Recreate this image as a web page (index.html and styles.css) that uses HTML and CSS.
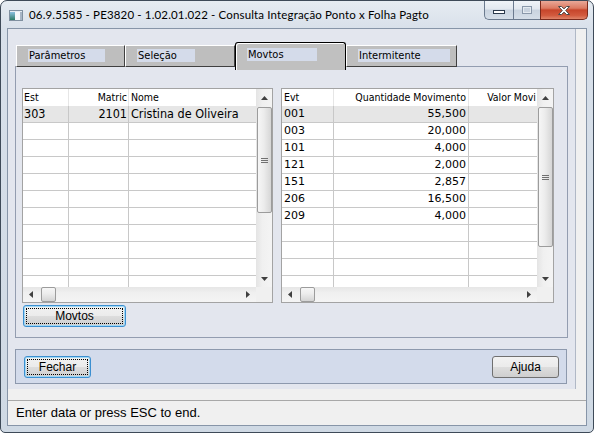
FILE: index.html
```html
<!DOCTYPE html>
<html>
<head>
<meta charset="utf-8">
<link rel="stylesheet" href="styles.css">
</head>
<body>
<div class="window">
  <div class="titlebar">
    <svg class="appicon" width="14" height="11" viewBox="0 0 14 11">
      <defs>
        <linearGradient id="ig" x1="0" y1="0" x2="0" y2="1">
          <stop offset="0" stop-color="#8cc0e0"/>
          <stop offset="1" stop-color="#2e7c66"/>
        </linearGradient>
      </defs>
      <rect x="0.5" y="0.5" width="13" height="10" fill="#e6ecf2" stroke="#8090a0"/>
      <rect x="1" y="2" width="5" height="8" fill="url(#ig)"/>
      <rect x="6" y="2" width="5" height="8" fill="#f6f8fa"/>
      <rect x="11" y="2" width="2" height="8" fill="#a8b6c6"/>
    </svg>
    <span class="title">06.9.5585 - PE3820 - 1.02.01.022 - Consulta Integração Ponto x Folha Pagto</span>
    <div class="controls">
      <div class="ctl ctl-min"><span class="min-glyph"></span></div>
      <div class="ctl ctl-max"><span class="max-glyph"></span></div>
      <div class="ctl ctl-close">
        <svg width="14" height="11" viewBox="0 0 14 11"><path d="M1.5 1.5h3l2.5 2.3 2.5-2.3h3l-3.8 4 3.8 4h-3l-2.5-2.3-2.5 2.3h-3l3.8-4z" fill="#fff" stroke="#4a4a4a" stroke-width="1" stroke-linejoin="round"/></svg>
      </div>
    </div>
  </div>

  <div class="client">
    <div class="client-top">
      <div class="main">
        <div class="tabs">
          <div class="tab tab-1"><span class="tab-label lw-1">Parâmetros</span></div>
          <div class="tab tab-2"><span class="tab-label lw-2">Seleção</span></div>
          <div class="tab tab-3 active"><span class="tab-label lw-3">Movtos</span></div>
          <div class="tab tab-4"><span class="tab-label lw-4">Intermitente</span></div>
        </div>

        <div class="tabpanel">
          <div class="grids">
            <div class="grid">
              <div class="grid-body">
                <div class="cells cells-left">
                  <div class="row hdr">
                    <div class="cell c-est hfont">Est</div>
                    <div class="cell c-mat num hfont">Matric</div>
                    <div class="cell c-nome hfont">Nome</div>
                  </div>
                  <div class="row sel lfont">
                    <div class="cell c-est">303</div>
                    <div class="cell c-mat num">2101</div>
                    <div class="cell c-nome">Cristina de Oliveira</div>
                  </div>
                  <div class="row"><div class="cell c-est"></div><div class="cell c-mat"></div><div class="cell c-nome"></div></div>
                  <div class="row"><div class="cell c-est"></div><div class="cell c-mat"></div><div class="cell c-nome"></div></div>
                  <div class="row"><div class="cell c-est"></div><div class="cell c-mat"></div><div class="cell c-nome"></div></div>
                  <div class="row"><div class="cell c-est"></div><div class="cell c-mat"></div><div class="cell c-nome"></div></div>
                  <div class="row"><div class="cell c-est"></div><div class="cell c-mat"></div><div class="cell c-nome"></div></div>
                  <div class="row"><div class="cell c-est"></div><div class="cell c-mat"></div><div class="cell c-nome"></div></div>
                  <div class="row"><div class="cell c-est"></div><div class="cell c-mat"></div><div class="cell c-nome"></div></div>
                  <div class="row"><div class="cell c-est"></div><div class="cell c-mat"></div><div class="cell c-nome"></div></div>
                  <div class="row"><div class="cell c-est"></div><div class="cell c-mat"></div><div class="cell c-nome"></div></div>
                  <div class="row"><div class="cell c-est"></div><div class="cell c-mat"></div><div class="cell c-nome"></div></div>
                </div>
                <div class="vscroll">
                  <div class="varrow"><svg width="7" height="4" viewBox="0 0 7 4"><path d="M3.5 0L7 4H0z" fill="#404040"/></svg></div>
                  <div class="vthumb th-left"><svg width="7" height="5" viewBox="0 0 7 5"><path d="M0 .5h7M0 2.5h7M0 4.5h7" stroke="#707070" stroke-width="1"/></svg></div>
                  <div class="vspacer"></div>
                  <div class="varrow"><svg width="7" height="4" viewBox="0 0 7 4"><path d="M0 0h7L3.5 4z" fill="#404040"/></svg></div>
                </div>
              </div>
              <div class="grid-foot">
                <div class="hscroll hs-left">
                  <div class="harrow"><svg width="4" height="7" viewBox="0 0 4 7"><path d="M4 0v7L0 3.5z" fill="#404040"/></svg></div>
                  <div class="hthumb"></div>
                  <div class="hspacer"></div>
                  <div class="harrow"><svg width="4" height="7" viewBox="0 0 4 7"><path d="M0 0l4 3.5L0 7z" fill="#404040"/></svg></div>
                </div>
                <div class="corner"></div>
              </div>
            </div>

            <div class="grid">
              <div class="grid-body">
                <div class="cells cells-right">
                  <div class="row hdr hfont">
                    <div class="cell c-evt">Evt</div>
                    <div class="cell c-qtd num">Quantidade Movimento</div>
                    <div class="cell c-val num">Valor Movi</div>
                  </div>
                  <div class="row sel rfont"><div class="cell c-evt">001</div><div class="cell c-qtd num">55,500</div><div class="cell c-val"></div></div>
                  <div class="row rfont"><div class="cell c-evt">003</div><div class="cell c-qtd num">20,000</div><div class="cell c-val"></div></div>
                  <div class="row rfont"><div class="cell c-evt">101</div><div class="cell c-qtd num">4,000</div><div class="cell c-val"></div></div>
                  <div class="row rfont"><div class="cell c-evt">121</div><div class="cell c-qtd num">2,000</div><div class="cell c-val"></div></div>
                  <div class="row rfont"><div class="cell c-evt">151</div><div class="cell c-qtd num">2,857</div><div class="cell c-val"></div></div>
                  <div class="row rfont"><div class="cell c-evt">206</div><div class="cell c-qtd num">16,500</div><div class="cell c-val"></div></div>
                  <div class="row rfont"><div class="cell c-evt">209</div><div class="cell c-qtd num">4,000</div><div class="cell c-val"></div></div>
                  <div class="row"><div class="cell c-evt"></div><div class="cell c-qtd"></div><div class="cell c-val"></div></div>
                  <div class="row"><div class="cell c-evt"></div><div class="cell c-qtd"></div><div class="cell c-val"></div></div>
                  <div class="row"><div class="cell c-evt"></div><div class="cell c-qtd"></div><div class="cell c-val"></div></div>
                  <div class="row"><div class="cell c-evt"></div><div class="cell c-qtd"></div><div class="cell c-val"></div></div>
                </div>
                <div class="vscroll">
                  <div class="varrow"><svg width="7" height="4" viewBox="0 0 7 4"><path d="M3.5 0L7 4H0z" fill="#404040"/></svg></div>
                  <div class="vthumb th-right"><svg width="7" height="5" viewBox="0 0 7 5"><path d="M0 .5h7M0 2.5h7M0 4.5h7" stroke="#707070" stroke-width="1"/></svg></div>
                  <div class="vspacer"></div>
                  <div class="varrow"><svg width="7" height="4" viewBox="0 0 7 4"><path d="M0 0h7L3.5 4z" fill="#404040"/></svg></div>
                </div>
              </div>
              <div class="grid-foot">
                <div class="hscroll hs-right">
                  <div class="harrow"><svg width="4" height="7" viewBox="0 0 4 7"><path d="M4 0v7L0 3.5z" fill="#404040"/></svg></div>
                  <div class="hthumb"></div>
                  <div class="hspacer"></div>
                  <div class="harrow"><svg width="4" height="7" viewBox="0 0 4 7"><path d="M0 0l4 3.5L0 7z" fill="#404040"/></svg></div>
                </div>
                <div class="corner"></div>
              </div>
            </div>
          </div>
          <button class="btn focus btn-movtos">Movtos</button>
        </div>

        <div class="btnpanel">
          <button class="btn focus btn-w">Fechar</button>
          <button class="btn btn-w">Ajuda</button>
        </div>
      </div>
      <div class="strip"></div>
    </div>
    <div class="status">Enter data or press ESC to end.</div>
  </div>
</div>
</body>
</html>
```

FILE: styles.css
```css
* { box-sizing: border-box; }
html, body { margin: 0; padding: 0; }
body {
  width: 594px;
  height: 433px;
  overflow: hidden;
  background: #ffffff;
  font-family: "DejaVu Sans Condensed", "DejaVu Sans", sans-serif;
  color: #000;
}

.window {
  width: 594px;
  height: 433px;
  border: 1px solid #3e4a58;
  border-radius: 7px 7px 5px 5px;
  background: linear-gradient(180deg, #e6ecf2 0, #d8e0ea 28px, #cfd9e4 100%);
  display: flex;
  flex-direction: column;
  overflow: hidden;
}

/* title bar */
.titlebar {
  height: 27px;
  flex: none;
  display: flex;
  align-items: flex-start;
}
.appicon { margin: 9px 0 0 8px; flex: none; }
.title {
  margin: 5px 0 0 6px;
  font-family: Lato, "Liberation Sans", sans-serif;
  font-size: 11.5px;
  letter-spacing: 0.15px;
  line-height: 18px;
  white-space: nowrap;
  color: #000;
}
.controls {
  margin-left: auto;
  margin-right: 5px;
  display: flex;
  height: 19px;
  flex: none;
}
.ctl {
  height: 19px;
  display: flex;
  align-items: center;
  justify-content: center;
  border: 1px solid #6b7a8e;
  border-top: none;
  background: linear-gradient(180deg, #f0f4f8 0, #e2e8ef 45%, #c9d3df 50%, #d5dee8 100%);
}
.ctl-min { width: 29px; border-radius: 0 0 0 5px; border-right: none; }
.ctl-max { width: 27px; border-right: none; }
.ctl-close {
  width: 48px;
  border-radius: 0 0 5px 0;
  border-color: #7a2a1c;
  background: linear-gradient(180deg, #e9a898 0, #dc7a62 40%, #c7452b 50%, #d25a3e 80%, #e0856a 100%);
}
.min-glyph {
  width: 12px;
  height: 4px;
  margin-top: 4px;
  background: #fff;
  border: 1px solid #2c3a4c;
}
.max-glyph {
  width: 10px;
  height: 8px;
  border: 1px solid #8a98aa;
  box-shadow: inset 0 0 0 1px #e4eaf0;
  background: #c8d2de;
}

/* client */
.client {
  flex: 1;
  margin: 0 6px 6px 6px;
  border: 1px solid #8795a8;
  background: #f0f0f0;
  display: flex;
  flex-direction: column;
}
.client-top { display: flex; height: 360px; flex: none; }
.main {
  width: 568px;
  background: #e3e6ee;
  border-right: 1px solid #b0b8c6;
  padding: 13px 7px 0 7px;
  display: flex;
  flex-direction: column;
}
.strip { flex: 1; background: #f0f0f0; }

/* tabs */
.tabs {
  display: flex;
  align-items: flex-end;
  height: 28px;
  margin: 0 0 -4px 1px;
  position: relative;
  z-index: 1;
}
.tab {
  height: 22px;
  margin-bottom: 3px;
  background: #bebebe;
  border-top: 1px solid #ffffff;
  border-left: 1px solid #ffffff;
  border-right: 1px solid #404040;
  border-bottom: 1px solid #404040;
  padding: 3px 0 0 11px;
}
.tab-1 { width: 109px; }
.tab-2 { width: 110px; }
.tab-3 { width: 111px; }
.tab-4 { width: 111px; }
.tab.active {
  height: 28px;
  margin-bottom: 0;
  border: 1px solid #000;
  border-bottom: none;
  border-radius: 3px 3px 0 0;
  box-shadow: inset 1px 1px 0 #ffffff;
  padding-top: 5px;
  background: #c0c0c0;
}
.tab-label {
  display: block;
  height: 13px;
  background: #d4dbea;
  font-size: 11px;
  line-height: 13px;
  padding-left: 1px;
  white-space: nowrap;
}
.lw-1 { width: 77px; }
.lw-2 { width: 58px; }
.lw-3 { width: 70px; }
.lw-4 { width: 92px; }

/* panel */
.tabpanel {
  height: 272px;
  flex: none;
  border: 1px solid #939db0;
  padding: 21px 0 0 6px;
}
.grids { display: flex; gap: 8px; }

.grid {
  border: 1px solid #a3a3a3;
  background: #ffffff;
  display: flex;
  flex-direction: column;
}
.grid-body { display: flex; height: 198px; }
.grid-foot { display: flex; height: 15px; }

.cells { overflow: hidden; height: 198px; }
.cells-left { width: 233px; }
.cells-right { width: 255px; }

.row { display: flex; height: 17px; }
.cell {
  flex: none;
  height: 17px;
  border-right: 1px solid #c8c8c8;
  border-bottom: 1px solid #c8c8c8;
  padding: 0 2px;
  line-height: 16px;
  white-space: nowrap;
  overflow: hidden;
}
.hdr .cell {
  border-bottom: none;
  border-right-color: #e6e6e6;
  line-height: 17px;
}
.hfont { font-size: 10.5px; }
.hdr.hfont .cell { font-size: 10.5px; }
.lfont { font-size: 12.5px; }
.rfont { font-family: "DejaVu Sans", sans-serif; font-size: 11px; }
.sel { background: #e6e6e6; }
.num { text-align: right; }

.c-est { width: 46px; padding-left: 1px; }
.c-mat { width: 60px; padding-right: 1px; }
.c-nome { width: 127px; padding-left: 2px; border-right: none; }
.c-evt { width: 52px; padding-left: 2px; }
.c-qtd { width: 135px; padding-right: 2px; }
.c-val { width: 68px; padding: 0 1px 0 0; border-right: none; }

/* scrollbars */
.vscroll {
  width: 16px;
  flex: none;
  display: flex;
  flex-direction: column;
  background: linear-gradient(90deg, #e4e4e4 0, #f0f0f0 40%, #f4f4f4 100%);
}
.varrow {
  height: 17px;
  flex: none;
  display: flex;
  align-items: center;
  justify-content: center;
  padding-left: 1px;
}
.vthumb {
  margin: 1px 0 0 1px;
  width: 15px;
  flex: none;
  border: 1px solid #9c9c9c;
  border-radius: 2px;
  background: linear-gradient(90deg, #f6f6f6 0, #ececec 45%, #d6d6d6 100%);
  display: flex;
  align-items: center;
  justify-content: center;
}
.th-left { height: 106px; }
.th-right { height: 140px; }
.vspacer { flex: 1; }

.hscroll {
  display: flex;
  align-items: center;
  height: 15px;
  background: linear-gradient(180deg, #e6e6e6 0, #f0f0f0 40%, #f4f4f4 100%);
}
.hs-left { width: 233px; }
.hs-right { width: 255px; }
.harrow {
  width: 16px;
  height: 15px;
  flex: none;
  display: flex;
  align-items: center;
  justify-content: center;
}
.hthumb {
  width: 15px;
  height: 15px;
  flex: none;
  margin-left: 2px;
  border: 1px solid #9c9c9c;
  border-radius: 2px;
  background: linear-gradient(180deg, #f6f6f6 0, #ececec 45%, #d4d4d4 100%);
}
.hspacer { flex: 1; }
.corner { width: 16px; height: 15px; background: #f0f0f0; }

/* buttons */
.btn {
  font-family: "Liberation Sans", Arial, sans-serif;
  font-size: 12px;
  color: #000;
  height: 22px;
  padding: 0;
  border: 1px solid #707070;
  border-radius: 3px;
  background: linear-gradient(180deg, #f2f2f2 0, #ebebeb 50%, #dddddd 51%, #cfcfcf 100%);
}
.btn.focus {
  border-color: #3c8fd0;
  box-shadow: inset 0 0 0 1px #9fd8f6;
  outline: 1px dotted #000;
  outline-offset: -4px;
}
.btn-movtos {
  width: 103px;
  margin: 2px 0 0 1px;
  align-self: flex-start;
}
.btnpanel {
  margin: 11px 1px 0 0;
  height: 35px;
  flex: none;
  border: 1px solid #8d99ad;
  background: #d3dbeb;
  display: flex;
  justify-content: space-between;
  align-items: flex-start;
  padding: 6px 7px 0 8px;
}
.btn-w { width: 67px; }

/* status */
.status {
  margin-top: auto;
  height: 25px;
  flex: none;
  border-top: 1px solid #a8a8a8;
  padding-left: 8px;
  font-family: "Liberation Sans", Arial, sans-serif;
  font-size: 13px;
  line-height: 23px;
  background: #f0f0f0;
}
```
